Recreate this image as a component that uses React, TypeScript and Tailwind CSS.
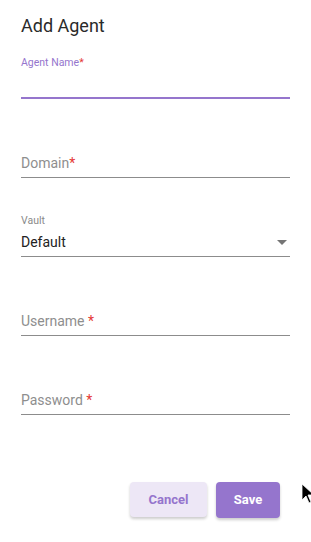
function Field({ label, small, value, active, spaced }: { label?: string; small?: string; value?: string; active?: boolean; spaced?: boolean }) {
  return (
    <div className="h-[79px] flex flex-col justify-end">
      {small && (
        <div className={`text-[10.5px] leading-[12px] ${active ? 'text-[#9575cd]' : 'text-[#8a8a8a]'}`}>
          {small}
          {active && <span className="text-[#e53935]">*</span>}
        </div>
      )}
      <div
        className={`h-[30px] pt-[2px] flex items-center justify-between ${
          active ? 'border-b-2 border-[#9575cd]' : 'border-b border-[#8c8c8c]'
        }`}
      >
        {label && (
          <span className="text-[14px] text-[#8e8e8e]">
            {label}
            {spaced && ' '}
            <span className="text-[#e53935]">*</span>
          </span>
        )}
        {value && <span className="text-[14px] text-[#222]">{value}</span>}
        {value && (
          <svg width="10" height="5" viewBox="0 0 10 5" className="mr-[3px]">
            <path d="M0 0h10L5 5z" fill="#757575" />
          </svg>
        )}
      </div>
    </div>
  );
}

export default function App() {
  return (
    <div className="relative w-[311px] h-[542px] bg-white overflow-hidden" style={{ fontFamily: 'Roboto, sans-serif' }}>
      <div className="px-[21px]">
        <h2 className="pt-[14px] text-[18px] leading-[24px] text-[#2a2a2a]">Add Agent</h2>
        <div className="-mt-[18px]">
          <Field small="Agent Name" active />
          <Field label="Domain" />
          <Field small="Vault" value="Default" />
          <Field label="Username" spaced />
          <Field label="Password" spaced />
        </div>
        <div className="mt-[67px] flex justify-end gap-[9px] pr-[10px]">
          <button className="w-[77px] h-[35px] rounded-[4px] bg-[#ede7f6] text-[#9575cd] text-[13px] font-bold shadow-[0_2px_3px_rgba(0,0,0,0.2)]">
            Cancel
          </button>
          <button className="w-[64px] h-[36px] rounded-[4px] bg-[#9575cd] text-white text-[13px] font-bold shadow-[0_2px_3px_rgba(0,0,0,0.2)]">
            Save
          </button>
        </div>
      </div>
      {/* mouse pointer */}
      <svg className="absolute left-[302px] top-[484px]" width="12" height="20" viewBox="0 0 12 20">
        <path d="M0 0v16l4-4 3 7 2-1-3-7h6z" fill="#000" stroke="#fff" strokeWidth="0.8" />
      </svg>
    </div>
  );
}
